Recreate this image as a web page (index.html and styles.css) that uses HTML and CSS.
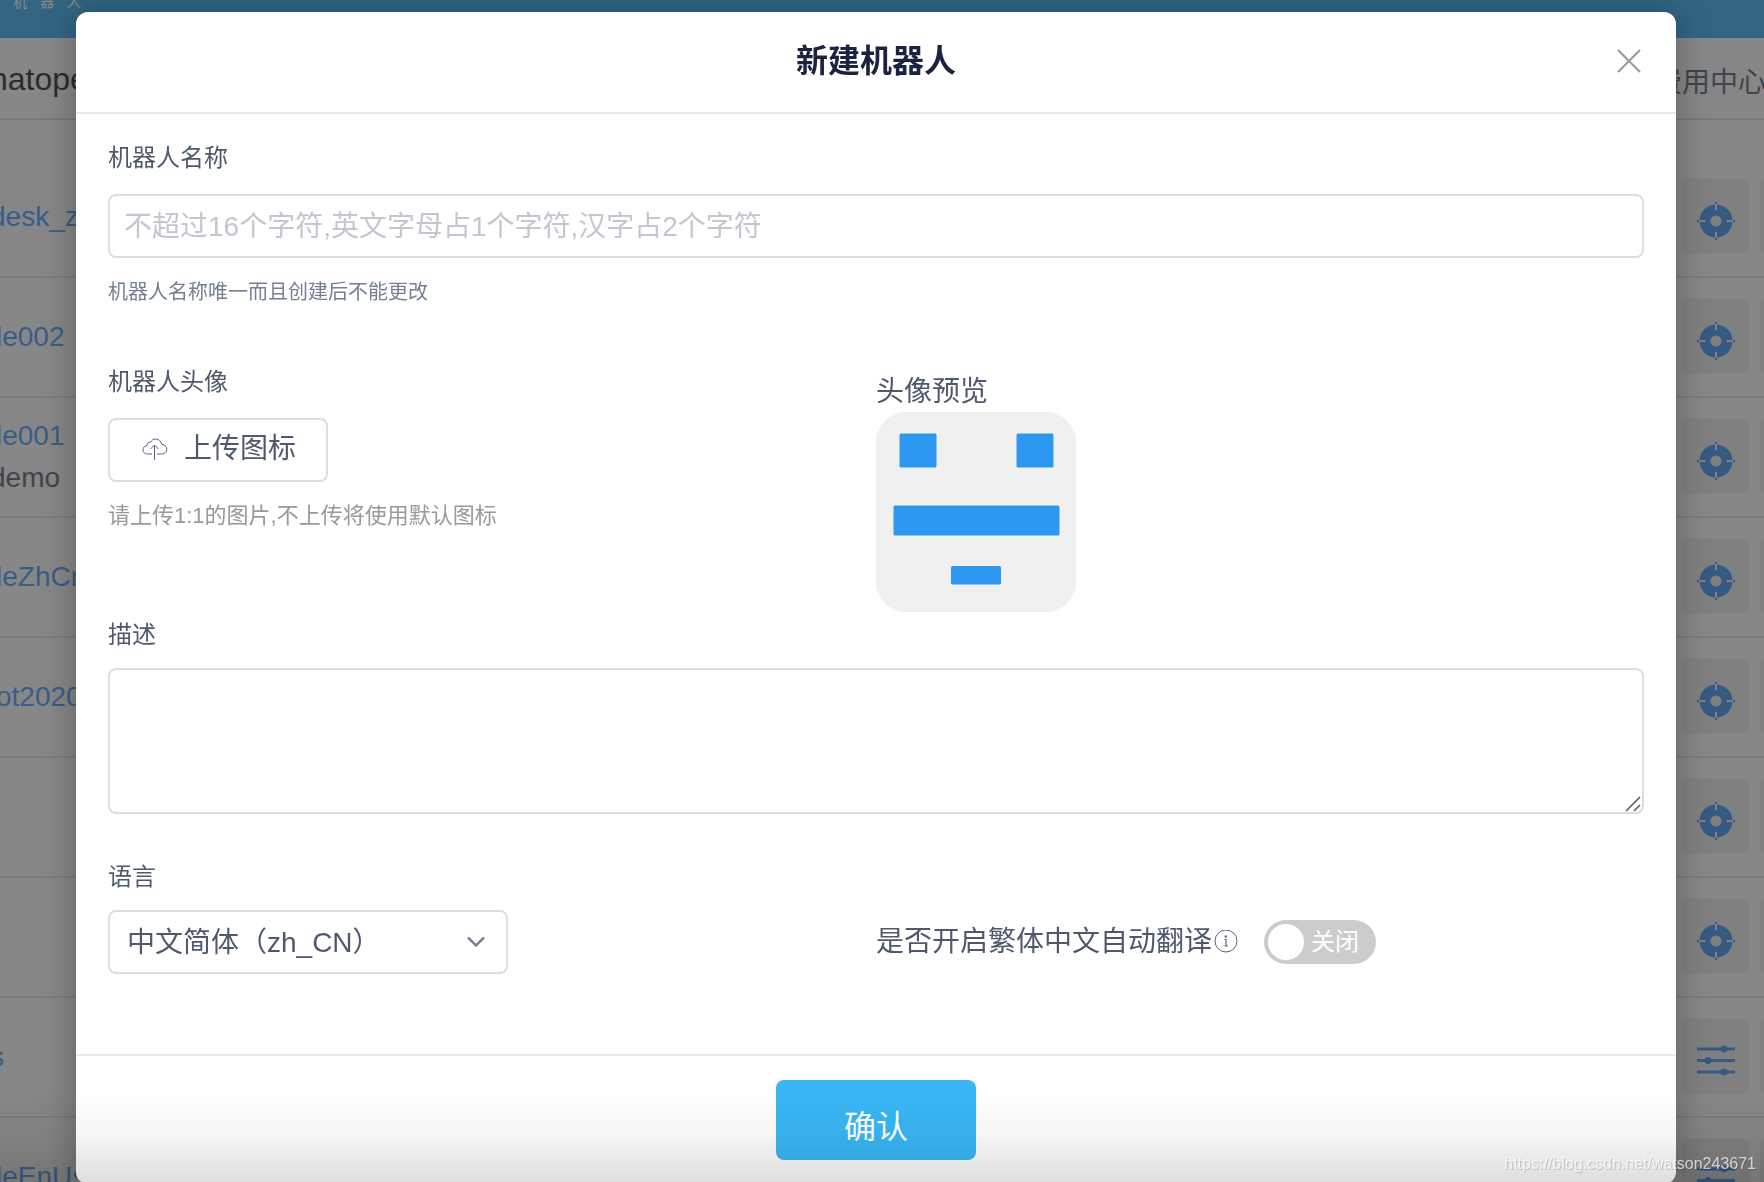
FILE: index.html
```html
<!DOCTYPE html>
<html lang="zh-CN">
<head>
    <meta charset="UTF-8">
    <meta name="viewport" content="width=device-width, initial-scale=1.0">
    <title>新建机器人</title>
    <link rel="stylesheet" href="styles.css">
</head>
<body>
    <svg class="sprite" aria-hidden="true">
        <symbol id="icon-target" viewBox="0 0 38 38">
            <circle cx="19" cy="19" r="11" fill="none" stroke="#3690f4" stroke-width="11"/>
            <path d="M19 2v6M19 30v6M2 19h6M30 19h6" stroke="#eeeeee" stroke-width="2"/>
            <path d="M19 0v2M19 36v2M0 19h2M36 19h2" stroke="#3690f4" stroke-width="2"/>
        </symbol>
        <symbol id="icon-sliders" viewBox="0 0 38 38">
            <path d="M0 7h38M0 18.500h38M0 30h38" stroke="#3690f4" stroke-width="3"/>
            <circle cx="27" cy="7" r="3.500" fill="#3690f4"/>
            <circle cx="11" cy="18.500" r="3.500" fill="#3690f4"/>
            <circle cx="27" cy="30" r="3.500" fill="#3690f4"/>
        </symbol>
    </svg>

    <div class="page">
        <header class="topbar">
            <div class="logo-text"><span>机</span><span>器</span><span>人</span></div>
        </header>
        <nav class="subnav">
            <span class="account cut">natope</span>
            <a class="nav-link" href="#">费用中心</a>
        </nav>
        <ul class="robot-list">
            <li class="robot">
                <a class="robot-name cut" href="#">desk_z</a>
                <div class="tools"><span class="tool"><svg><use href="#icon-target"/></svg></span><span class="tool"></span></div>
            </li>
            <li class="robot">
                <a class="robot-name" href="#">le002</a>
                <div class="tools"><span class="tool"><svg><use href="#icon-target"/></svg></span><span class="tool"></span></div>
            </li>
            <li class="robot">
                <div>
                    <a class="robot-name" href="#">le001</a>
                    <p class="robot-desc cut">demo</p>
                </div>
                <div class="tools"><span class="tool"><svg><use href="#icon-target"/></svg></span><span class="tool"></span></div>
            </li>
            <li class="robot">
                <a class="robot-name" href="#">leZhCn</a>
                <div class="tools"><span class="tool"><svg><use href="#icon-target"/></svg></span><span class="tool"></span></div>
            </li>
            <li class="robot">
                <a class="robot-name" href="#">ot2020</a>
                <div class="tools"><span class="tool"><svg><use href="#icon-target"/></svg></span><span class="tool"></span></div>
            </li>
            <li class="robot">
                <div class="tools"><span class="tool"><svg><use href="#icon-target"/></svg></span><span class="tool"></span></div>
            </li>
            <li class="robot">
                <div class="tools"><span class="tool"><svg><use href="#icon-target"/></svg></span><span class="tool"></span></div>
            </li>
            <li class="robot">
                <a class="robot-name cut" href="#">s</a>
                <div class="tools"><span class="tool"><svg><use href="#icon-sliders"/></svg></span><span class="tool"></span></div>
            </li>
            <li class="robot">
                <a class="robot-name" href="#">leEnUs</a>
                <div class="tools"><span class="tool"><svg><use href="#icon-sliders"/></svg></span><span class="tool"></span></div>
            </li>
        </ul>
    </div>

    <div class="overlay">
        <form class="modal" role="dialog" aria-labelledby="modal-title">
            <header class="modal-header">
                <h1 id="modal-title">新建机器人</h1>
                <button class="close" type="button" aria-label="关闭">
                    <svg width="24" height="24" viewBox="0 0 24 24"><path d="M1 1l22 22M23 1L1 23" stroke="#999" stroke-width="2"/></svg>
                </button>
            </header>

            <div class="modal-body">
                <div class="field">
                    <label class="label" for="name">机器人名称</label>
                    <input class="control" id="name" type="text" placeholder="不超过16个字符,英文字母占1个字符,汉字占2个字符">
                    <p class="help">机器人名称唯一而且创建后不能更改</p>
                </div>

                <div class="row avatar-row">
                    <div class="field">
                        <label class="label" for="upload">机器人头像</label>
                        <button class="upload" id="upload" type="button">
                            <svg width="26" height="24" viewBox="0 0 26 24" fill="none" stroke="#5a6478" stroke-width="1">
                                <path d="M10 17H5.500C2.800 17 1 15.300 1 12.800c0-2.300 1.600-3.900 3.900-4.100C4.800 6.500 6.500 5 8.500 5.300 9.600 3.200 11.400 2 13.600 2c3.200 0 5.700 2.300 6 5.300 3 .4 5.200 2.300 5.200 4.800 0 2.800-2.200 4.900-5.200 4.900H15"/>
                                <path d="M12.500 23V8M8.500 12l4-4 4 4"/>
                            </svg>
                            <span>上传图标</span>
                        </button>
                        <p class="help hint">请上传1:1的图片,不上传将使用默认图标</p>
                    </div>
                    <div class="preview">
                        <p>头像预览</p>
                        <svg class="avatar" viewBox="0 0 200 200" role="img" aria-label="头像预览">
                            <rect width="200" height="200" rx="30" fill="#f0f0f0"/>
                            <g fill="#2c98f0">
                                <rect x="23.500" y="21.500" width="37" height="34" rx="1.500"/>
                                <rect x="140.500" y="21.500" width="37" height="34" rx="1.500"/>
                                <rect x="17.500" y="93.500" width="166" height="30" rx="1.500"/>
                                <rect x="75" y="154" width="50" height="18.500" rx="1.500"/>
                            </g>
                        </svg>
                    </div>
                </div>

                <div class="field">
                    <label class="label label-tight" for="desc">描述</label>
                    <div class="textarea-wrap">
                        <textarea class="control" id="desc"></textarea>
                        <svg class="grip" width="16" height="16" viewBox="0 0 16 16"><path d="M1 15L15 1M9 15l6-6" stroke="#555" stroke-width="1.500"/></svg>
                    </div>
                </div>

                <div class="row language-row">
                    <div class="field">
                        <label class="label label-tight" for="lang">语言</label>
                        <div class="select-wrap">
                            <select class="control" id="lang">
                                <option>中文简体（zh_CN）</option>
                            </select>
                            <svg class="chevron" width="18" height="12" viewBox="0 0 18 12"><path d="M1 1.500l8 8 8-8" fill="none" stroke="#7a8499" stroke-width="2.500"/></svg>
                        </div>
                    </div>
                    <div class="translate">
                        <label for="translate">是否开启繁体中文自动翻译</label>
                        <svg class="info" width="28" height="24" viewBox="0 0 28 24" fill="none" stroke="#5a6478">
                            <circle cx="14" cy="11" r="11"/>
                            <path d="M12.500 9.500H14V16M12.500 16h3.500" stroke-width="1.200"/>
                            <circle cx="13.800" cy="6.500" r="1.200" fill="#5a6478" stroke="none"/>
                        </svg>
                        <label class="switch">
                            <input id="translate" type="checkbox">
                            <span>关闭</span>
                        </label>
                    </div>
                </div>
            </div>

            <footer class="modal-footer">
                <button class="confirm" type="submit">确认</button>
            </footer>
        </form>
    </div>

    <div class="fade">
        <span class="watermark">https://blog.csdn.net/watson243671</span>
    </div>
</body>
</html>
```

FILE: styles.css
```css
* {
    margin: 0;
    padding: 0;
    box-sizing: border-box;
}

body {
    height: 100vh;
    overflow: hidden;
    background-color: #fff;
    color: #4e596e;
    font-family: "Liberation Sans", "Noto Sans CJK SC", sans-serif;
    font-size: 28px;
    line-height: 40px;
}

a {
    color: #3c96ff;
    text-decoration: none;
}

button,
input,
select,
textarea {
    font: inherit;
    color: inherit;
}

.sprite {
    position: absolute;
    width: 0;
    height: 0;
}

/* page behind the dialog */
.page {
    height: 100vh;
    overflow: hidden;
}

.topbar {
    height: 38px;
    background-color: #28aaf0;
}

.logo-text {
    display: flex;
    gap: 13px;
    padding-left: 13px;
    color: #fff;
    font-size: 14px;
    line-height: 4px;
}

.subnav {
    display: flex;
    justify-content: space-between;
    align-items: center;
    height: 82px;
    border-bottom: 2px solid #e0e0e0;
}

.account {
    padding-top: 2px;
    color: #1a1a1a;
    font-size: 32px;
}

.nav-link {
    margin-right: -2px;
    padding-top: 10px;
    color: #4e596e;
}

.robot-list {
    padding-top: 38px;
    list-style: none;
}

.robot {
    display: flex;
    justify-content: space-between;
    align-items: center;
    height: 120px;
    border-bottom: 2px solid #e4e4e4;
}

.robot-name {
    display: block;
    margin-left: -4px;
}

.robot-desc {
    padding-top: 2px;
}

.cut {
    margin-left: -10px;
}

.tools {
    display: flex;
    gap: 10px;
    margin-left: auto;
    margin-right: -64px;
    padding-bottom: 2px;
}

.tool {
    display: flex;
    justify-content: center;
    align-items: center;
    width: 68px;
    height: 76px;
    padding-top: 10px;
    border-radius: 6px;
    background-color: #eee;
}

.tool svg {
    width: 38px;
    height: 38px;
}

/* dialog */
.overlay {
    position: fixed;
    inset: 0;
    overflow: hidden;
    padding: 12px 88px 0 76px;
    background-color: rgba(55, 55, 55, 0.6);
}

.modal {
    background-color: #fff;
    border-radius: 12px;
    box-shadow: 0 4px 36px rgba(0, 0, 0, 0.3);
}

.modal-header {
    display: grid;
    grid-template-columns: 1fr auto 1fr;
    align-items: center;
    height: 102px;
    padding: 0 35px 2px;
    border-bottom: 2px solid #e8e8e8;
}

.modal-header h1 {
    grid-column: 2;
    color: #1a2340;
    font-size: 32px;
    font-weight: bold;
}

.close {
    display: flex;
    justify-self: end;
    border: none;
    background: none;
    cursor: pointer;
}

.modal-body {
    padding: 28px 32px 80px;
}

.label {
    display: block;
    margin-bottom: 20px;
    font-size: 24px;
    line-height: 32px;
}

.label-tight {
    margin-bottom: 17px;
}

.control {
    display: block;
    width: 100%;
    height: 64px;
    padding: 2px 14px 0;
    border: 2px solid #dcdce4;
    border-radius: 8px;
    background-color: #fff;
    outline: none;
}

.control::placeholder {
    color: #c4c6cf;
}

.help {
    margin-top: 18px;
    color: #758094;
    font-size: 20px;
    line-height: 32px;
}

.hint {
    color: #999;
    font-size: 22px;
}

.row {
    display: grid;
    grid-template-columns: 1fr 1fr;
}

.avatar-row {
    margin-top: 58px;
    margin-bottom: 7px;
}

.upload {
    display: flex;
    align-items: center;
    gap: 16px;
    height: 64px;
    padding: 0 30px 2px 32px;
    border: 2px solid #dcdce4;
    border-radius: 8px;
    background-color: #fff;
    cursor: pointer;
}

.preview {
    padding-top: 6px;
}

.avatar {
    display: block;
    width: 200px;
    height: 200px;
}

.textarea-wrap,
.select-wrap {
    position: relative;
}

textarea.control {
    height: 146px;
    padding: 10px 14px;
    resize: none;
}

.grip {
    position: absolute;
    right: 3px;
    bottom: 2px;
}

.language-row {
    margin-top: 47px;
}

.select-wrap {
    width: 400px;
}

select.control {
    padding: 2px 17px 0;
    appearance: none;
}

.chevron {
    position: absolute;
    top: 26px;
    right: 23px;
    pointer-events: none;
}

.translate {
    display: flex;
    align-items: center;
    align-self: end;
    height: 64px;
}

.switch {
    display: flex;
    align-items: center;
    gap: 7px;
    width: 112px;
    height: 44px;
    margin-left: 24px;
    padding-left: 4px;
    border-radius: 22px;
    background-color: #ccc;
    color: #fff;
    font-size: 24px;
    cursor: pointer;
}

.switch input {
    appearance: none;
    width: 36px;
    height: 36px;
    border-radius: 50%;
    background-color: #fff;
}

.modal-footer {
    display: flex;
    justify-content: center;
    padding: 24px;
    border-top: 2px solid #e8e8e8;
}

.confirm {
    width: 200px;
    height: 80px;
    padding-top: 14px;
    border: none;
    border-radius: 8px;
    background-color: #38b7f4;
    color: #fff;
    font-size: 32px;
    cursor: pointer;
}

/* shade along the bottom edge */
.fade {
    position: fixed;
    left: 0;
    right: 0;
    bottom: 0;
    display: flex;
    justify-content: flex-end;
    align-items: flex-end;
    height: 90px;
    padding: 0 8px 8px;
    background: linear-gradient(to bottom, rgba(0, 0, 0, 0), rgba(0, 0, 0, 0.04) 50%, rgba(0, 0, 0, 0.13));
    pointer-events: none;
}

.watermark {
    color: rgba(255, 255, 255, 0.7);
    font-size: 16px;
    line-height: 20px;
    text-shadow: 1px 1px 1px rgba(0, 0, 0, 0.2);
}
```
